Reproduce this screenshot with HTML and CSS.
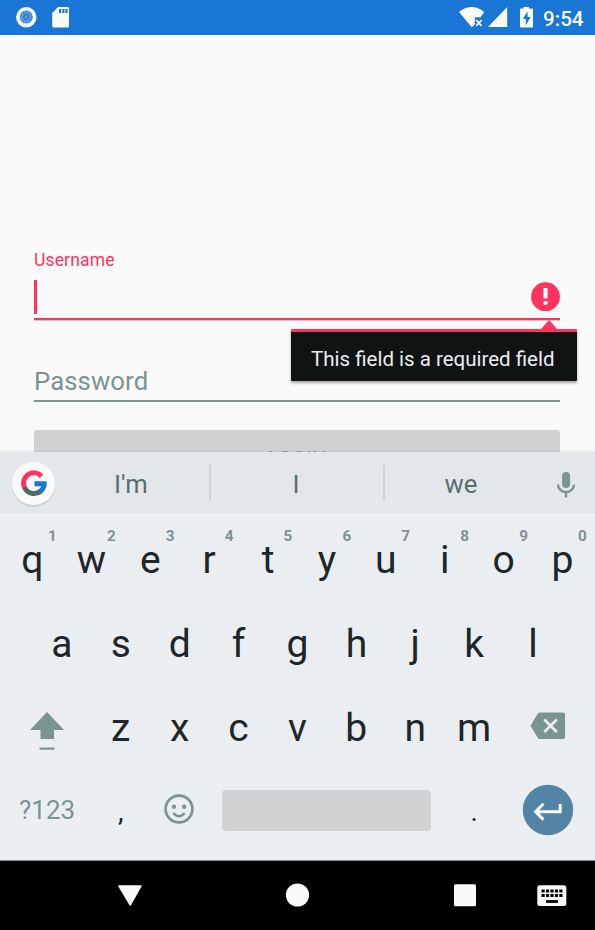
FILE: index.html
```html
<!DOCTYPE html>
<html lang="en">
<head>
<meta charset="utf-8">
<title>Login</title>
<link rel="stylesheet" href="styles.css">
</head>
<body>
<div class="screen">
  <header class="status">
    <svg class="status-icons-left" width="80" height="35" viewBox="0 0 80 35">
      <circle cx="26.300" cy="17.300" r="10.200" fill="#fafafa"/>
      <circle cx="26.300" cy="17" r="6.600" fill="#6fa3da"/>
      <circle cx="26.300" cy="17" r="5.500" fill="none" stroke="#1976d5" stroke-width="1.200" stroke-dasharray="1 .8"/>
      <circle cx="26.300" cy="17" r="2.500" fill="none" stroke="#1976d5" stroke-width="2.600" stroke-dasharray="1 .5"/>
      <path d="M58 7h9.500a1.500 1.500 0 0 1 1.500 1.500v17.500a1.500 1.500 0 0 1-1.500 1.500H53.700a1.500 1.500 0 0 1-1.500-1.500V13z" fill="#fafafa"/>
      <path d="M59 9h2.200v4H59zM62.300 9h2.200v4h-2.200zM65.400 9h2.200v4h-2.200z" fill="#1976d5"/>
    </svg>
    <svg width="82" height="35" viewBox="458 0 82 35">
      <path d="M459 12Q471.500 2 484.300 12L480.500 17.200H474.800V24.500L471.800 27.200z" fill="#fafafa"/>
      <path d="M476.200 20.200l5.400 5.600m0-5.600l-5.400 5.600" stroke="#fafafa" stroke-width="1.700"/>
      <path d="M507.200 7v20H488z" fill="#fafafa"/>
      <path d="M523.500 7h5.500v1.500h3a1 1 0 0 1 1 1V26.500a1 1 0 0 1-1 1h-11a1 1 0 0 1-1-1V9.500a1 1 0 0 1 1-1h2.500z" fill="#fafafa"/>
      <path d="M527.500 11.500L522.800 19h3v6.500l4.800-8.500h-3z" fill="#1976d5"/>
    </svg>
    <span class="clock">9:54</span>
  </header>

  <main class="form">
    <div class="label">Username</div>
    <div class="field field-error">
      <span class="caret"></span>
      <svg class="error-icon" width="30" height="30" viewBox="0 0 30 30">
        <circle cx="15.500" cy="14.700" r="14.400" fill="#ff3360"/>
        <rect x="13.400" y="6" width="4.200" height="10.500" rx="1" fill="#fafafa"/>
        <rect x="13.400" y="19" width="4.200" height="3.800" rx="1.200" fill="#fafafa"/>
      </svg>
      <div class="tooltip">This field is a required field</div>
    </div>
    <div class="field field-password">Password</div>
    <div class="button">LOGIN</div>
  </main>

  <section class="keyboard">
    <div class="suggestions">
      <div class="google">
        <svg width="26" height="27" viewBox="0 0 26 27">
          <g fill="none" stroke-width="5">
            <path d="M20.500 6.200A10.300 10.300 0 0 0 3.800 18" stroke="#ff3360"/>
            <path d="M3.600 17.500A10.300 10.300 0 0 0 19.800 21" stroke="#4e6a66"/>
            <path d="M13.500 13.800H23.200Q23.200 18.500 18.900 21.700" stroke="#1976d5"/>
          </g>
        </svg>
      </div>
      <span class="word">I'm</span>
      <span class="word">I</span>
      <span class="word word-last">we</span>
      <svg class="mic" width="20" height="28" viewBox="0 0 20 28">
        <rect x="6.100" y="1" width="8" height="16" rx="4" fill="#7b9391"/>
        <path d="M2 13.500a8 7.500 0 0 0 16 0M10 21v5.500" fill="none" stroke="#7b9391" stroke-width="2.400"/>
      </svg>
    </div>

    <div class="keys">
      <div class="row">
        <span class="key">q<small>1</small></span><span class="key">w<small>2</small></span><span class="key">e<small>3</small></span><span class="key">r<small>4</small></span><span class="key">t<small>5</small></span><span class="key">y<small>6</small></span><span class="key">u<small>7</small></span><span class="key">i<small>8</small></span><span class="key">o<small>9</small></span><span class="key">p<small>0</small></span>
      </div>
      <div class="row">
        <span class="key">a</span><span class="key">s</span><span class="key">d</span><span class="key">f</span><span class="key">g</span><span class="key">h</span><span class="key">j</span><span class="key">k</span><span class="key">l</span>
      </div>
      <div class="row">
        <span class="key wide shift">
          <svg width="36" height="40" viewBox="0 0 36 40"><path d="M18 0L35 18H25v9H11.500v-9H1zM10.500 35.500H25.500v2.200H10.500z" fill="#7b9391"/></svg>
        </span>
        <span class="key">z</span><span class="key">x</span><span class="key">c</span><span class="key">v</span><span class="key">b</span><span class="key">n</span><span class="key">m</span>
        <span class="key wide backspace">
          <svg width="36" height="28" viewBox="0 0 36 28"><path d="M9.500.5H33a2 2 0 0 1 2 2v22.500a2 2 0 0 1-2 2H9.500Q8.500 27 7.500 25.500L.5 13.700 7.500 2Q8.500.5 9.500.5z" fill="#7b9391"/><path d="M14.300 7.500l12.500 12.500m0-12.500L14.300 20" stroke="#ebeef1" stroke-width="2.700"/></svg>
        </span>
      </div>
      <div class="row row-bottom">
        <span class="key wide symbols">?123</span>
        <span class="key comma">,</span>
        <span class="key emoji">
          <svg width="30" height="30" viewBox="0 0 30 30"><circle cx="15" cy="15" r="13.400" fill="none" stroke="#7b9391" stroke-width="2.700"/><circle cx="9.900" cy="12.700" r="2.200" fill="#7b9391"/><circle cx="20.200" cy="12.700" r="2.200" fill="#7b9391"/><path d="M9.200 19.200Q15 25.200 20.800 19.200" fill="none" stroke="#7b9391" stroke-width="2.500"/></svg>
        </span>
        <span class="spacebar"></span>
        <span class="key comma">.</span>
        <span class="key wide">
          <svg width="52" height="52" viewBox="0 0 52 52"><circle cx="26" cy="26" r="25.200" fill="#5484a5"/><path d="M38.200 20v7.700H14.500M21.500 19.800L13.600 27.700l7.900 7.900" fill="none" stroke="#fafafa" stroke-width="3"/></svg>
        </span>
      </div>
    </div>
  </section>

  <nav class="navbar">
    <svg width="595" height="69" viewBox="0 861 595 69">
      <path d="M119 886h22L130.300 905z" fill="#fafafa" stroke="#fafafa" stroke-width="1.500" stroke-linejoin="round"/>
      <circle cx="297.500" cy="895" r="11.600" fill="#fafafa"/>
      <rect x="454" y="884.300" width="22" height="22" rx="1.500" fill="#fafafa"/>
      <rect x="537.300" y="885.300" width="29" height="20.700" rx="2.500" fill="#fafafa"/>
      <path d="M541.500 891h21M541.500 895.500h21" stroke="#000" stroke-width="3.200" stroke-dasharray="3.200 1.250"/>
      <path d="M546 901.500h12" stroke="#000" stroke-width="2.800"/>
    </svg>
  </nav>
</div>
</body>
</html>
```
FILE: styles.css
```css
* { box-sizing: border-box; }
body { margin: 0; background: #fafafa; }
svg { display: block; flex: none; }

.screen {
  width: 595px;
  height: 930px;
  display: flex;
  flex-direction: column;
  overflow: hidden;
  background: #fafafa;
  font-family: Roboto, "Liberation Sans", sans-serif;
}

.status {
  height: 35px;
  flex: none;
  display: flex;
  align-items: center;
  background: #1976d5;
}
.status-icons-left { margin-right: auto; }
.clock {
  width: 55px;
  padding: 2px 0 0 3px;
  color: #fafafa;
  font-size: 20.6px;
  font-weight: 500;
  white-space: nowrap;
}

.form {
  height: 417px;
  flex: none;
  padding: 214px 35px 0 34px;
}
.label {
  height: 23px;
  line-height: 22px;
  color: #ff3360;
  font-size: 17.5px;
  letter-spacing: 0.15px;
}
.field { position: relative; display: flex; }
.field-error {
  height: 48px;
  padding-top: 8px;
  justify-content: space-between;
  border-bottom: 2px solid #ff3360;
  box-shadow: 0 1px 0 #cfc6c9;
}
.caret { width: 3px; height: 34px; background: #ff3360; }
.error-icon { margin-top: 2px; }
.tooltip {
  position: absolute;
  top: 57px;
  left: 257px;
  width: 286px;
  height: 52px;
  padding-left: 20px;
  border-top: 3px solid #ff3360;
  border-radius: 1px;
  background: #101314;
  box-shadow: 0 2px 3px rgba(0, 0, 0, 0.35);
  color: #ebeef1;
  font-size: 20.5px;
  line-height: 54px;
  white-space: nowrap;
  z-index: 1;
}
.tooltip::before {
  content: "";
  position: absolute;
  top: -12px;
  left: 250px;
  border: solid transparent;
  border-width: 0 8px 9px;
  border-bottom-color: #ff3360;
}
.field-password {
  height: 82px;
  padding-top: 46px;
  border-bottom: 2px solid #7b9391;
  color: #7b9391;
  font-size: 25.7px;
  line-height: 30px;
  letter-spacing: 0.1px;
}
.button {
  height: 70px;
  margin-top: 28px;
  padding-top: 17px;
  border-radius: 3px;
  background: #d0d1d3;
  color: #7b9391;
  font-size: 20.5px;
  font-weight: 500;
  line-height: 24px;
  text-align: center;
}

.keyboard {
  position: relative;
  height: 409px;
  flex: none;
  border-bottom: 1px solid #7b9391;
  background: #ebeef1;
  box-shadow: 0 -1px 3px rgba(120, 140, 150, 0.18);
  z-index: 2;
}
.suggestions {
  height: 63px;
  display: flex;
  align-items: center;
  padding-left: 12px;
  background: #e4e7ea;
  border-bottom: 1px solid #f0f2f4;
}
.google {
  width: 43px;
  height: 43px;
  margin: 0 -2px 0 0;
  display: grid;
  place-items: center;
  border-radius: 50%;
  background: #fafafa;
  box-shadow: 0 2px 1px #cdcfd1;
}
.word {
  width: 174px;
  height: 36px;
  padding-top: 4px;
  border-right: 2px solid #cfd1d3;
  color: #58706d;
  font-size: 25.7px;
  line-height: 30px;
  text-align: center;
}
.word:nth-child(2) { width: 158px; }
.word:nth-child(3) { padding-right: 2px; }
.word-last { width: 152px; border: 0; }
.mic { margin: 3px 0 0 19px; }

.keys { padding: 2px 3px 0 3px; }
.row { height: 83.8px; padding-top: 2px; display: flex; align-items: center; }
.row:nth-child(2) { justify-content: center; }
.key {
  position: relative;
  flex: none;
  width: 58.9px;
  height: 84px;
  display: flex;
  align-items: center;
  justify-content: center;
  color: #202628;
  font-size: 39px;
  line-height: 46px;
}
.key small {
  position: absolute;
  top: 8px;
  left: 45px;
  color: #7b9391;
  font-size: 15.3px;
  font-weight: 700;
  line-height: 20px;
}
.wide { width: 88.300px; }
.shift { padding-top: 9px; }
.backspace { padding-bottom: 3px; }
.row-bottom { padding-top: 0; }
.symbols { color: #7b9391; font-size: 26px; }
.comma { font-size: 28px; padding-top: 4px; }
.emoji { padding-bottom: 2px; padding-right: 1px; }
.spacebar { flex: none; width: 209px; height: 41px; margin: 0 13.300px; border-radius: 4px; background: #d0d1d3; }

.navbar { flex: none; height: 69px; background: #000; }
```
